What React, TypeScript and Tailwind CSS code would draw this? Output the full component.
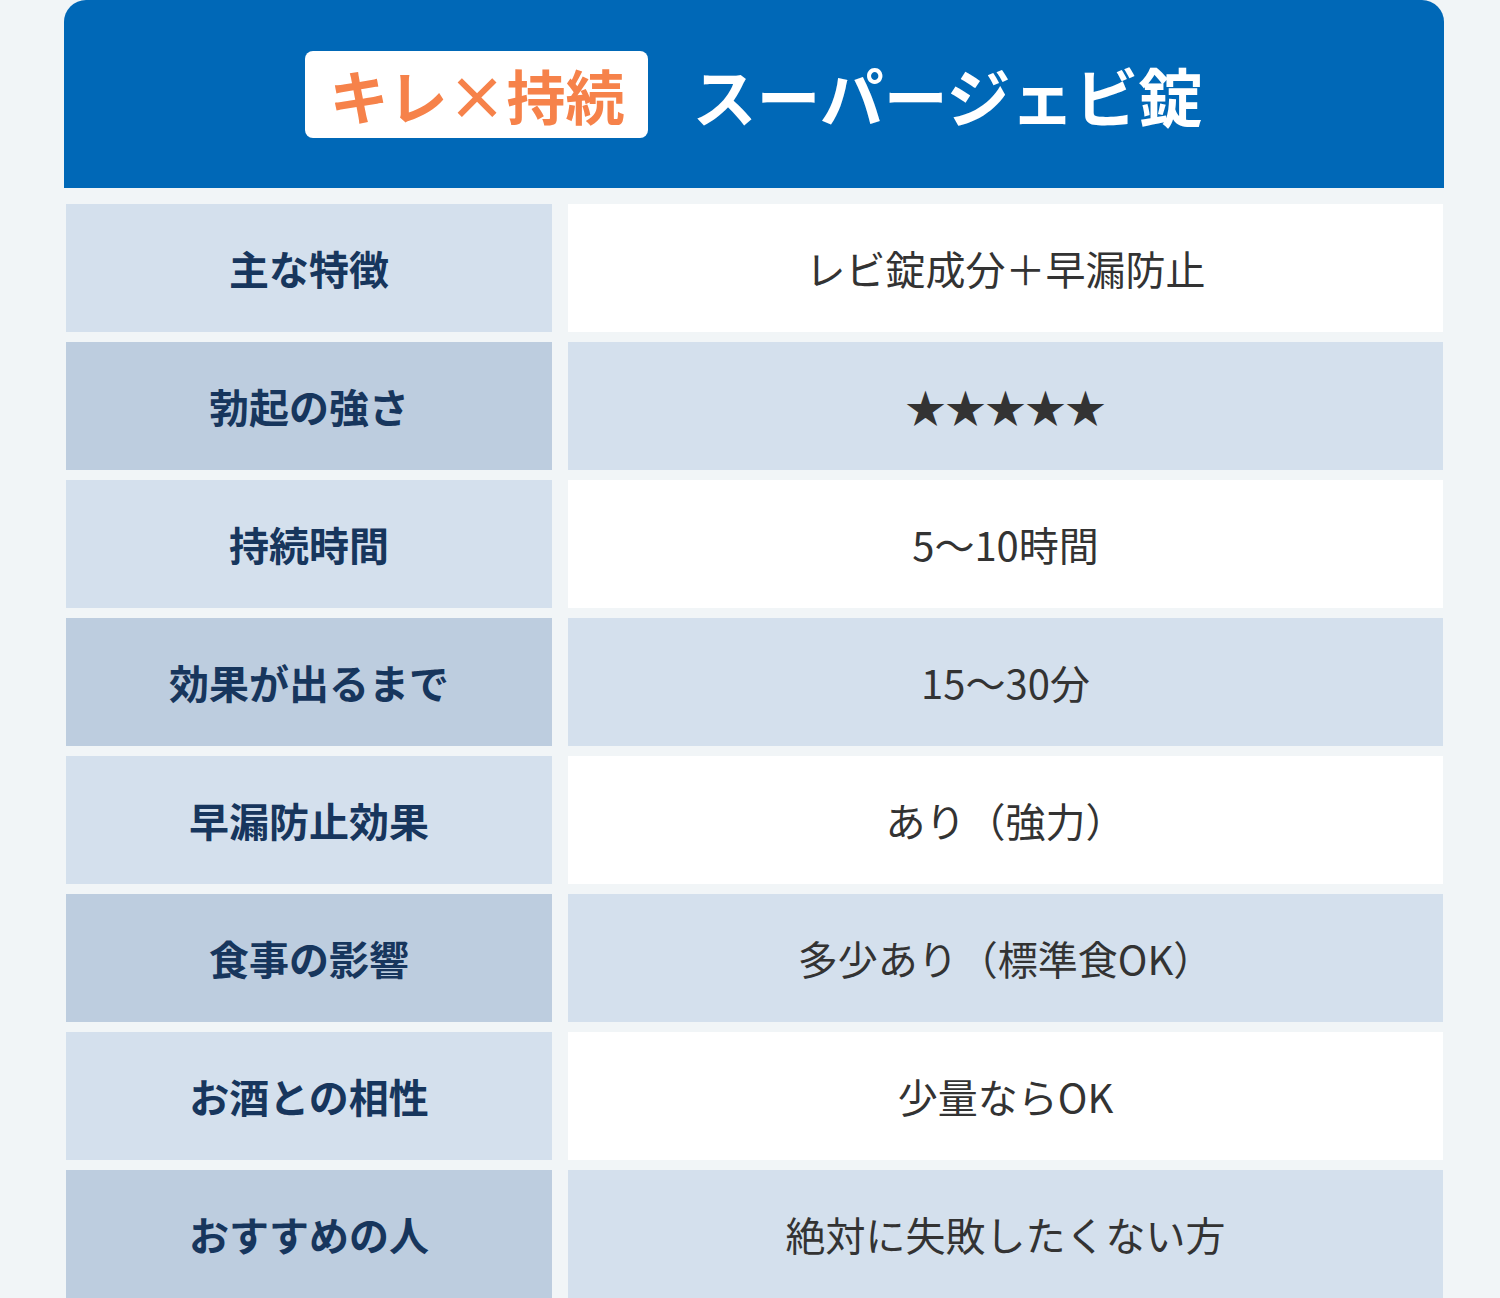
const rows = [
  { label: "主な特徴", value: "レビ錠成分＋早漏防止" },
  { label: "勃起の強さ", value: "★★★★★" },
  { label: "持続時間", value: "5〜10時間" },
  { label: "効果が出るまで", value: "15〜30分" },
  { label: "早漏防止効果", value: "あり（強力）" },
  { label: "食事の影響", value: "多少あり（標準食OK）" },
  { label: "お酒との相性", value: "少量ならOK" },
  { label: "おすすめの人", value: "絶対に失敗したくない方" },
];

const font = { fontFamily: '"Noto Sans CJK JP", "Noto Sans", sans-serif' };

const App = () => {
  return (
    <div className="h-[1298px] overflow-hidden bg-[#f1f5f7] pl-[64px] pr-[56px]" style={font}>
      <div className="flex h-[188px] items-center justify-center gap-[44px] rounded-t-[22px] bg-[#0068b7]">
        <div className="flex h-[87px] items-center rounded-[8px] bg-white px-[24px]">
          <span className="text-[59px] font-bold leading-none text-[#f6824a]">キレ×持続</span>
        </div>
        <span className="text-[64px] font-bold leading-none text-white">スーパージェビ錠</span>
      </div>
      <div className="flex flex-col gap-[10px] pl-[2px] pr-[1px] pt-[16px]">
        {rows.map((row, i) => (
          <div key={row.label} className="flex h-[128px] shrink-0 gap-[16px]">
            <div
              className={
                "flex w-[486px] shrink-0 items-center justify-center text-[40px] font-bold text-[#17365d] " +
                (i % 2 === 0 ? "bg-[#d4e0ed]" : "bg-[#bdcddf]")
              }
            >
              {row.label}
            </div>
            <div
              className={
                "flex flex-1 items-center justify-center text-[40px] text-[#333333] " +
                (i % 2 === 0 ? "bg-white" : "bg-[#d4e0ed]")
              }
            >
              {row.value}
            </div>
          </div>
        ))}
      </div>
    </div>
  );
};

export default App;
